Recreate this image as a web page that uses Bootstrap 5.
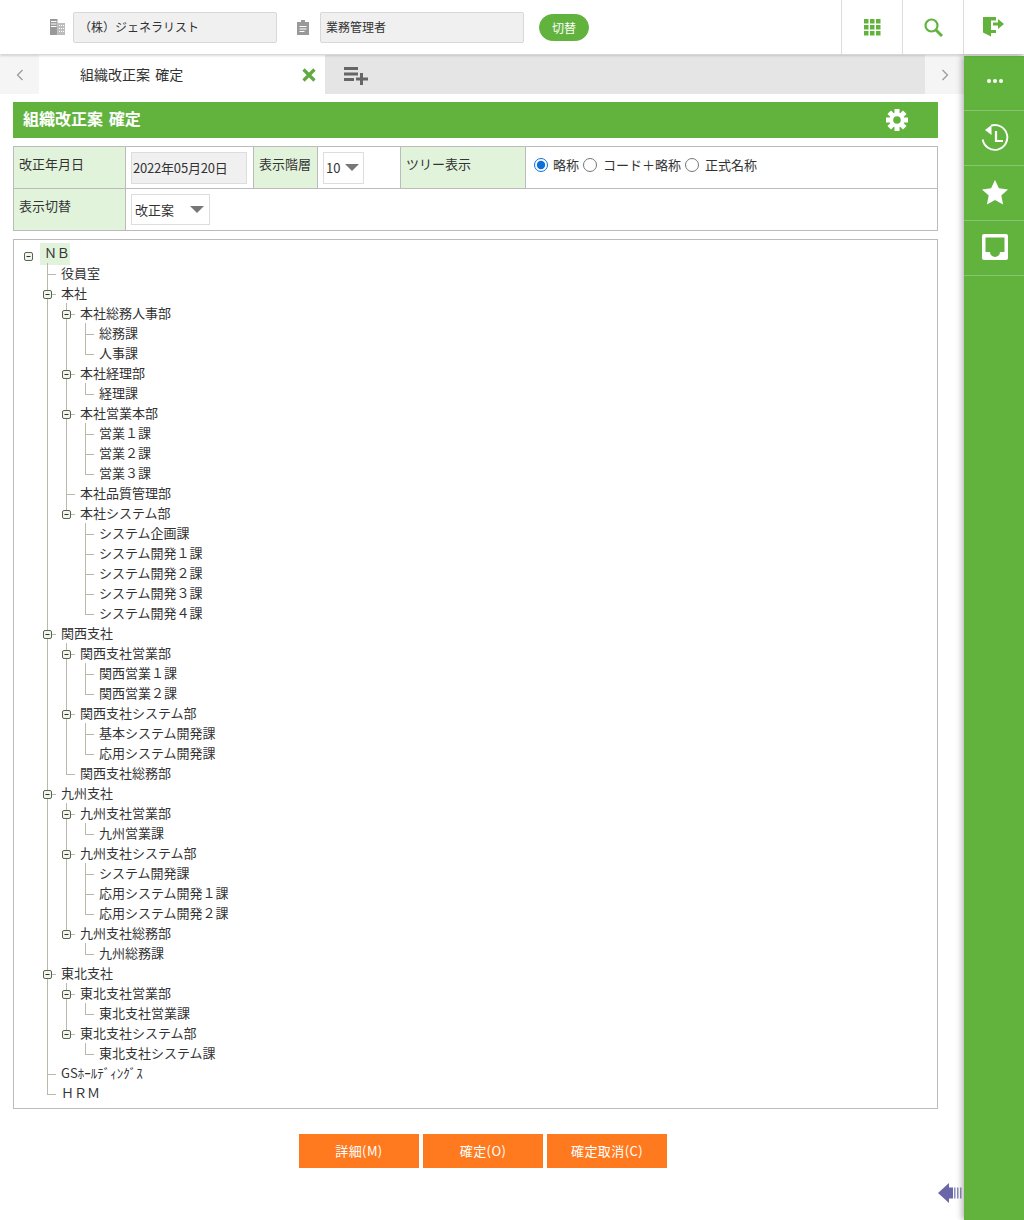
<!DOCTYPE html>
<html lang="ja">
<head>
<meta charset="utf-8">
<title>組織改正案 確定</title>
<link href="https://cdn.jsdelivr.net/npm/bootstrap@5.3.0/dist/css/bootstrap.min.css" rel="stylesheet">
<style>
html,body{height:100%}
body{font-family:"Noto Sans CJK JP","Noto Sans",sans-serif;font-size:13px;color:#333;overflow:hidden;background:#fff}
.top-bar{height:54px;background:#fff;box-shadow:0 1px 3px rgba(0,0,0,.25);z-index:3;position:relative;padding-left:50px}
.bld-ico{width:15px;height:16px}
.clip-ico{width:12px;height:15px;margin-left:20px;fill:#999}
.fld{height:31px;margin-top:1px;border-radius:2px;border:1px solid #d8d8d8;background:#f0f0f0;font-size:12px;color:#333;padding:0 5px;line-height:28px;box-shadow:none}
.fld-a{width:204px;margin-left:8px}
.fld-b{width:204px;margin-left:11px}
.swap-btn{--bs-btn-bg:#62b33e;--bs-btn-border-color:#62b33e;--bs-btn-color:#fff;--bs-btn-hover-bg:#62b33e;--bs-btn-hover-color:#fff;width:50px;height:27px;padding:0;border-radius:14px;font-size:12px;margin-left:15px;line-height:23px}
.top-act{width:61px;height:54px;border-left:1px solid #ddd}
.body-row{height:1166px}
.main-col{width:964px;flex:none;padding-top:1px}
.side-col{width:60px;flex:none;background:#62b33e;box-shadow:-2px 0 6px rgba(0,0,0,.3);z-index:2;margin-top:2px}
.side-item{height:55px;border-bottom:1px solid #8ac471;padding-left:2px}
.side-up{padding-bottom:2px}
.side-dots{padding-bottom:4px}
.tab-strip{height:39px}
.tab-nav{width:39px;background:#f5f5f5;color:#999}
.tab-live{width:286px;background:#fff;font-size:14px;padding-left:41px;padding-right:9px;word-spacing:2px}
.tab-rest{background:#e5e5e5;padding-left:19px}
.add-ico{margin-top:3px}
.page-body{padding:8px 26px 0 13px}
.title-bar{height:36px;background:#62b33e;color:#fff;font-size:16px;font-weight:700;padding:0 30px 0 10px;word-spacing:2px}
.title-txt{padding-bottom:4px}
.gear-ico{margin-bottom:1px}
.cond-tbl{table-layout:fixed;width:925px;margin:8px 0 8px;border-color:#bbb;--bs-table-color:#333}
.cond-tbl td{padding:5px 5px 4px;vertical-align:top;border:1px solid #bbb;font-size:13px;line-height:28px}
.cond-tbl tr+tr td{padding-bottom:5px}
.cond-tbl .lbl{background:#e2f3dc;padding-top:3px;padding-left:5px}
.w1{width:112px}.w2{width:128px}.w3{width:64px}.w4{width:83px}.w5{width:125px}
.cond-tbl .opt{padding:4px 8px 0;white-space:nowrap}
.radio-line{height:28px}
.radio-line input{width:14px;height:14px;margin:0 5px 0 0;accent-color:#0f6fd6;flex:none}
.radio-line span{margin-right:4px}
.radio-line input+span.gap6{margin-left:1px}
.date-box{width:116px;height:32px;background:#f0f0f0;border:1px solid #ddd;border-radius:0;font-size:13px;padding:0 0 0 1px;line-height:32px;color:#333;letter-spacing:-.2px}
.sel-box{border:1px solid #ddd;border-radius:0;padding:0 0 0 2px;height:32px;font-size:13px;color:#333;background-position:right 4px center;background-size:14px 8px;background-repeat:no-repeat;line-height:30px;background-image:url("data:image/svg+xml,%3Csvg xmlns='http://www.w3.org/2000/svg' viewBox='0 0 14 8'%3E%3Cpath fill='%23777' d='M0 0h14L7 7z'/%3E%3C/svg%3E")}
.sel-n{width:41px}
.sel-k{width:79px;height:31px;padding-left:3px;background-position:right 5px center}
.tree-box{border:1px solid #bbb;height:870px;padding:3px 0 0 5px;font-size:13px;line-height:20px}
.node{height:20px;display:flex;white-space:nowrap}
.g{flex:none;width:19px;height:20px;display:block;background-repeat:no-repeat}
.v{background-image:linear-gradient(#b9b9a8,#b9b9a8);background-size:1px 100%;background-position:9px 0}
.t{background-image:linear-gradient(#b9b9a8,#b9b9a8),linear-gradient(#b9b9a8,#b9b9a8);background-size:1px 100%,9px 1px;background-position:9px 0,9px 11px}
.l{background-image:linear-gradient(#b9b9a8,#b9b9a8),linear-gradient(#b9b9a8,#b9b9a8);background-size:1px 12px,9px 1px;background-position:9px 0,9px 11px}
.g svg{display:block;width:19px;height:20px}
.txt{padding-left:4px}
.root-txt{margin-left:2px;padding:0 4px;background:#e2f3dc;height:22px;width:30px;letter-spacing:-.3px}
.act-row{padding-top:25px;padding-left:15px}
.act-btn{--bs-btn-bg:#ff7a1f;--bs-btn-border-color:#ff7a1f;--bs-btn-color:#fff;--bs-btn-hover-bg:#ff7a1f;--bs-btn-hover-color:#fff;width:120px;height:34px;border-radius:0;padding:0;font-size:13px;line-height:32px;letter-spacing:.4px}
.act-row .act-btn+.act-btn{margin-left:4px}
.back-row{padding-top:15px;padding-right:2px}
</style>
</head>
<body>
<svg width="0" height="0" class="d-block" aria-hidden="true"><defs>
<g id="mbox"><rect x="5.5" y="7.5" width="8" height="8" rx="1.5" fill="#f2f5ec" stroke="#55654f"/><rect x="7.5" y="11" width="4" height="1" fill="#2f2f2f"/></g>
</defs></svg>

<header class="top-bar d-flex align-items-center">
  <svg class="bld-ico" viewBox="0 0 15 16"><path fill="#999" d="M0 0h7.500v16H0z"/><path fill="#fff" d="M1 2h5.500v1H1zM1 4.500h5.500v1H1zM1 7h5.500v1H1z"/><path fill="#bcbcbc" d="M7.500 4H15v12H7.500z"/><path fill="#fff" d="M9 6h1v1H9zM11 6h1v1h-1zM13 6h1v1h-1zM9 9h1v1H9zM11 9h1v1h-1zM13 9h1v1h-1zM9 12h1v1H9zM11 12h1v1h-1zM13 12h1v1h-1z"/></svg>
  <div class="fld fld-a">（株）ジェネラリスト</div>
  <svg class="clip-ico" viewBox="0 0 12 15"><path d="M4 0h4v2h4v13H0V2h4z"/><path fill="#fff" d="M2.500 6h7v1h-7zM2.500 8.500h7v1h-7zM2.500 11h5v1h-5z"/></svg>
  <div class="fld fld-b">業務管理者</div>
  <button type="button" class="btn swap-btn">切替</button>
  <div class="ms-auto d-flex">
    <div class="top-act d-flex align-items-center justify-content-center">
      <svg width="17" height="17" viewBox="0 0 17 17" fill="#62b33e"><path d="M0 0h4.500v4.500H0zM6 0h4.500v4.500H6zM12 0h4.500v4.500H12zM0 6h4.500v4.500H0zM6 6h4.500v4.500H6zM12 6h4.500v4.500H12zM0 12h4.500v4.500H0zM6 12h4.500v4.500H6zM12 12h4.500v4.500H12z"/></svg>
    </div>
    <div class="top-act d-flex align-items-center justify-content-center">
      <svg width="19" height="19" viewBox="0 0 19 19" fill="none" stroke="#62b33e"><circle cx="7.500" cy="7.500" r="6" stroke-width="2.200"/><path d="M12 12l6 6" stroke-width="3"/></svg>
    </div>
    <div class="top-act d-flex align-items-center justify-content-center">
      <svg width="22" height="20" viewBox="0 0 22 20" fill="#62b33e"><path d="M0 0H13V3.500H8V13H13V16H8V19.500L0 15.500Z"/><path d="M10 5.500H15V2L21 7 15 12V8.500H10Z"/></svg>
    </div>
  </div>
</header>

<div class="d-flex body-row">
  <main class="main-col">
    <div class="tab-strip d-flex">
      <div class="tab-nav d-flex align-items-center justify-content-center">
        <svg width="8" height="12" viewBox="0 0 8 12" fill="none" stroke="#999" stroke-width="1.200"><path d="M6.500 1L1.500 6l5 5"/></svg>
      </div>
      <div class="tab-live d-flex align-items-center justify-content-between">
        <span>組織改正案 確定</span>
        <svg width="14" height="14" viewBox="0 0 14 14" fill="none" stroke="#62a93f" stroke-width="3.200"><path d="M1.500 1.500l11 11M12.500 1.500l-11 11"/></svg>
      </div>
      <div class="tab-rest flex-grow-1 d-flex align-items-center">
        <svg class="add-ico" width="24" height="18" viewBox="0 0 24 18" fill="#666"><path d="M0 0h14v3H0zM0 5.500h14v3H0zM0 11h10v3H0zM16 6h3v4.500h5v3h-5V18h-3v-4.500h-4v-3h4z"/></svg>
      </div>
      <div class="tab-nav d-flex align-items-center justify-content-center">
        <svg width="8" height="12" viewBox="0 0 8 12" fill="none" stroke="#999" stroke-width="1.200"><path d="M1.500 1l5 5-5 5"/></svg>
      </div>
    </div>

    <div class="page-body">
      <div class="title-bar d-flex justify-content-between align-items-center">
        <span class="title-txt">組織改正案 確定</span>
        <svg class="gear-ico" width="22" height="22" viewBox="0 0 22 22" fill="#fff"><g><rect x="8.500" y="0" width="5" height="22"/><rect x="8.500" y="0" width="5" height="22" transform="rotate(45 11 11)"/><rect x="8.500" y="0" width="5" height="22" transform="rotate(90 11 11)"/><rect x="8.500" y="0" width="5" height="22" transform="rotate(135 11 11)"/><circle cx="11" cy="11" r="7.500"/></g><circle cx="11" cy="11" r="3.800" fill="#62b33e"/></svg>
      </div>

      <table class="table table-bordered cond-tbl">
        <colgroup><col class="w1"><col class="w2"><col class="w3"><col class="w4"><col class="w5"><col></colgroup>
        <tbody>
          <tr>
            <td class="lbl">改正年月日</td>
            <td><input class="form-control date-box" type="text" value="2022年05月20日" readonly></td>
            <td class="lbl">表示階層</td>
            <td><select class="form-select sel-box sel-n"><option>10</option></select></td>
            <td class="lbl">ツリー表示</td>
            <td class="opt"><div class="radio-line d-flex align-items-center"><input type="radio" name="tv" checked><span>略称</span><input type="radio" name="tv"><span class="gap6">コード＋略称</span><input type="radio" name="tv"><span class="gap6">正式名称</span></div></td>
          </tr>
          <tr>
            <td class="lbl">表示切替</td>
            <td colspan="5"><select class="form-select sel-box sel-k"><option>改正案</option></select></td>
          </tr>
        </tbody>
      </table>

      <div class="tree-box">
        <div class="node"><i class="g"><svg viewBox="0 -2 19 20"><use href="#mbox"/></svg></i><span class="root-txt">ＮＢ</span></div>
        <div class="node"><i class="g"></i><i class="g t"></i><span class="txt">役員室</span></div>
        <div class="node"><i class="g"></i><i class="g t"><svg viewBox="0 0 19 20"><use href="#mbox"/></svg></i><span class="txt">本社</span></div>
        <div class="node"><i class="g"></i><i class="g v"></i><i class="g t"><svg viewBox="0 0 19 20"><use href="#mbox"/></svg></i><span class="txt">本社総務人事部</span></div>
        <div class="node"><i class="g"></i><i class="g v"></i><i class="g v"></i><i class="g t"></i><span class="txt">総務課</span></div>
        <div class="node"><i class="g"></i><i class="g v"></i><i class="g v"></i><i class="g l"></i><span class="txt">人事課</span></div>
        <div class="node"><i class="g"></i><i class="g v"></i><i class="g t"><svg viewBox="0 0 19 20"><use href="#mbox"/></svg></i><span class="txt">本社経理部</span></div>
        <div class="node"><i class="g"></i><i class="g v"></i><i class="g v"></i><i class="g l"></i><span class="txt">経理課</span></div>
        <div class="node"><i class="g"></i><i class="g v"></i><i class="g t"><svg viewBox="0 0 19 20"><use href="#mbox"/></svg></i><span class="txt">本社営業本部</span></div>
        <div class="node"><i class="g"></i><i class="g v"></i><i class="g v"></i><i class="g t"></i><span class="txt">営業１課</span></div>
        <div class="node"><i class="g"></i><i class="g v"></i><i class="g v"></i><i class="g t"></i><span class="txt">営業２課</span></div>
        <div class="node"><i class="g"></i><i class="g v"></i><i class="g v"></i><i class="g l"></i><span class="txt">営業３課</span></div>
        <div class="node"><i class="g"></i><i class="g v"></i><i class="g t"></i><span class="txt">本社品質管理部</span></div>
        <div class="node"><i class="g"></i><i class="g v"></i><i class="g l"><svg viewBox="0 0 19 20"><use href="#mbox"/></svg></i><span class="txt">本社システム部</span></div>
        <div class="node"><i class="g"></i><i class="g v"></i><i class="g"></i><i class="g t"></i><span class="txt">システム企画課</span></div>
        <div class="node"><i class="g"></i><i class="g v"></i><i class="g"></i><i class="g t"></i><span class="txt">システム開発１課</span></div>
        <div class="node"><i class="g"></i><i class="g v"></i><i class="g"></i><i class="g t"></i><span class="txt">システム開発２課</span></div>
        <div class="node"><i class="g"></i><i class="g v"></i><i class="g"></i><i class="g t"></i><span class="txt">システム開発３課</span></div>
        <div class="node"><i class="g"></i><i class="g v"></i><i class="g"></i><i class="g l"></i><span class="txt">システム開発４課</span></div>
        <div class="node"><i class="g"></i><i class="g t"><svg viewBox="0 0 19 20"><use href="#mbox"/></svg></i><span class="txt">関西支社</span></div>
        <div class="node"><i class="g"></i><i class="g v"></i><i class="g t"><svg viewBox="0 0 19 20"><use href="#mbox"/></svg></i><span class="txt">関西支社営業部</span></div>
        <div class="node"><i class="g"></i><i class="g v"></i><i class="g v"></i><i class="g t"></i><span class="txt">関西営業１課</span></div>
        <div class="node"><i class="g"></i><i class="g v"></i><i class="g v"></i><i class="g l"></i><span class="txt">関西営業２課</span></div>
        <div class="node"><i class="g"></i><i class="g v"></i><i class="g t"><svg viewBox="0 0 19 20"><use href="#mbox"/></svg></i><span class="txt">関西支社システム部</span></div>
        <div class="node"><i class="g"></i><i class="g v"></i><i class="g v"></i><i class="g t"></i><span class="txt">基本システム開発課</span></div>
        <div class="node"><i class="g"></i><i class="g v"></i><i class="g v"></i><i class="g l"></i><span class="txt">応用システム開発課</span></div>
        <div class="node"><i class="g"></i><i class="g v"></i><i class="g l"></i><span class="txt">関西支社総務部</span></div>
        <div class="node"><i class="g"></i><i class="g t"><svg viewBox="0 0 19 20"><use href="#mbox"/></svg></i><span class="txt">九州支社</span></div>
        <div class="node"><i class="g"></i><i class="g v"></i><i class="g t"><svg viewBox="0 0 19 20"><use href="#mbox"/></svg></i><span class="txt">九州支社営業部</span></div>
        <div class="node"><i class="g"></i><i class="g v"></i><i class="g v"></i><i class="g l"></i><span class="txt">九州営業課</span></div>
        <div class="node"><i class="g"></i><i class="g v"></i><i class="g t"><svg viewBox="0 0 19 20"><use href="#mbox"/></svg></i><span class="txt">九州支社システム部</span></div>
        <div class="node"><i class="g"></i><i class="g v"></i><i class="g v"></i><i class="g t"></i><span class="txt">システム開発課</span></div>
        <div class="node"><i class="g"></i><i class="g v"></i><i class="g v"></i><i class="g t"></i><span class="txt">応用システム開発１課</span></div>
        <div class="node"><i class="g"></i><i class="g v"></i><i class="g v"></i><i class="g l"></i><span class="txt">応用システム開発２課</span></div>
        <div class="node"><i class="g"></i><i class="g v"></i><i class="g l"><svg viewBox="0 0 19 20"><use href="#mbox"/></svg></i><span class="txt">九州支社総務部</span></div>
        <div class="node"><i class="g"></i><i class="g v"></i><i class="g"></i><i class="g l"></i><span class="txt">九州総務課</span></div>
        <div class="node"><i class="g"></i><i class="g t"><svg viewBox="0 0 19 20"><use href="#mbox"/></svg></i><span class="txt">東北支社</span></div>
        <div class="node"><i class="g"></i><i class="g v"></i><i class="g t"><svg viewBox="0 0 19 20"><use href="#mbox"/></svg></i><span class="txt">東北支社営業部</span></div>
        <div class="node"><i class="g"></i><i class="g v"></i><i class="g v"></i><i class="g l"></i><span class="txt">東北支社営業課</span></div>
        <div class="node"><i class="g"></i><i class="g v"></i><i class="g l"><svg viewBox="0 0 19 20"><use href="#mbox"/></svg></i><span class="txt">東北支社システム部</span></div>
        <div class="node"><i class="g"></i><i class="g v"></i><i class="g"></i><i class="g l"></i><span class="txt">東北支社システム課</span></div>
        <div class="node"><i class="g"></i><i class="g t"></i><span class="txt">GSﾎｰﾙﾃﾞｨﾝｸﾞｽ</span></div>
        <div class="node"><i class="g"></i><i class="g l"></i><span class="txt">ＨＲＭ</span></div>
      </div>

      <div class="act-row d-flex justify-content-center">
        <button type="button" class="btn act-btn">詳細(M)</button>
        <button type="button" class="btn act-btn">確定(O)</button>
        <button type="button" class="btn act-btn">確定取消(C)</button>
      </div>
    </div>
    <div class="back-row d-flex justify-content-end">
      <svg width="24" height="20" viewBox="0 0 24 20" fill="#6a66a8"><path d="M11 0v4.500h4v11h-4V20L0 10z"/><path fill="#8e8bbd" d="M16 4.500h1.500v11H16zM19 4.500h1.500v11H19zM22 4.500h1.500v11H22z"/></svg>
    </div>
  </main>
  <aside class="side-col">
    <div class="side-item side-dots d-flex align-items-center justify-content-center">
      <svg width="16" height="4" viewBox="0 0 16 4" fill="#fff"><circle cx="2" cy="2" r="2"/><circle cx="8" cy="2" r="2"/><circle cx="14" cy="2" r="2"/></svg>
    </div>
    <div class="side-item d-flex align-items-center justify-content-center">
      <svg width="28" height="28" viewBox="0 0 28 28" fill="none" stroke="#fff" stroke-width="1.900"><path d="M10 1.700A12.400 12.400 0 1 1 1.700 15.500"/><path d="M4 6L10.500 1v10z" fill="#fff" stroke="none"/><path d="M15 7v10h7" stroke-width="2.200"/></svg>
    </div>
    <div class="side-item side-up d-flex align-items-center justify-content-center">
      <svg width="26" height="25" viewBox="0 0 26 25" fill="#fff"><path d="M13 0l3.900 8.300 9.100 1.100-6.700 6.200 1.800 9L13 20.100l-8.100 4.500 1.800-9L0 9.400l9.100-1.100z"/></svg>
    </div>
    <div class="side-item side-up d-flex align-items-center justify-content-center">
      <svg width="26" height="26" viewBox="0 0 26 26"><path fill="#fff" fill-rule="evenodd" d="M2 0h22a2 2 0 0 1 2 2v22a2 2 0 0 1-2 2H2a2 2 0 0 1-2-2V2a2 2 0 0 1 2-2zM3.500 3.500V18H8a5 5 0 0 0 10 0h4.500V3.500z"/></svg>
    </div>
  </aside>
</div>
</body>
</html>
